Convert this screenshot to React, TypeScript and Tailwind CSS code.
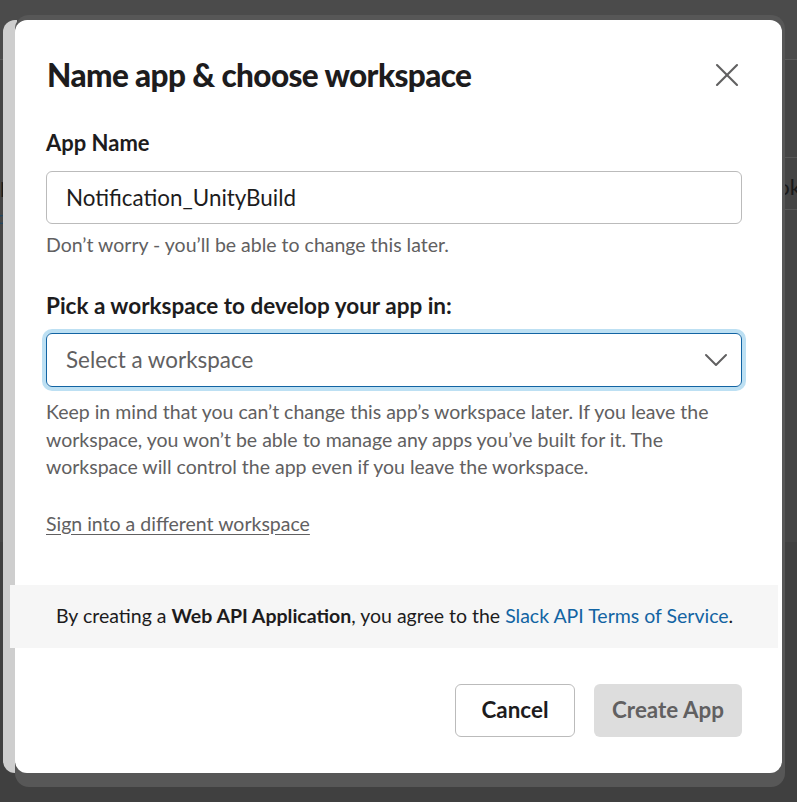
import { X, ChevronDown } from "lucide-react";

export default function App() {
  return (
    <div
      className="relative w-[797px] h-[802px] overflow-hidden bg-[#454545]"
      style={{ fontFamily: "Lato, 'Noto Sans', sans-serif" }}
    >
      {/* faint page behind the overlay */}
      <div className="absolute left-0 top-0 w-full h-[60px] bg-[#4b4b4b] border-b border-[#5a5a5a]" />
      <div className="absolute left-0 top-[168px] text-[22px] text-[#1a1a1a]">p</div>
      <div className="absolute left-[-4px] top-[204px] text-[18px] text-[#1f4660]">c</div>
      <div className="absolute right-0 top-[157px] w-[16px] h-[53px] border-y border-[#575757]" />
      <div className="absolute right-[-4px] top-[170px] text-[22px] text-[#1a1a1a]">ok</div>
      <div className="absolute left-0 bottom-0 w-full h-[260px] bg-[#404040]" />

      <div className="relative flex ml-[3px] mt-[15px]">
        <div className="w-[14px] h-[753px] mt-[5px] bg-[#cecece] rounded-l-[12px]" />
        <div className="-ml-[2px] bg-[#575757] rounded-[14px] pt-[5px] pr-[3px] pb-[14px]">
          <div className="w-[767px] h-[753px] bg-white rounded-[12px] flex flex-col">
            <div className="flex items-center justify-between pl-[32px] pr-[35px] pt-[35px]">
              <h1 className="text-[31.5px] leading-[36px] font-black tracking-[-0.6px] text-[#1d1c1d]">
                Name app &amp; choose workspace
              </h1>
              <X size={40} strokeWidth={1.25} className="text-[#616061]" />
            </div>

            <div className="flex flex-col pl-[31px] pr-[40px] pt-[34px]">
              <label className="text-[22px] leading-[28px] font-bold text-[#1d1c1d]">App Name</label>
              <div className="mt-[14px] h-[53px] border border-[#bbbbbb] rounded-[6px] flex items-center px-[19px] text-[22.4px] text-[#1d1c1d]">
                Notification_UnityBuild
              </div>
              <p className="mt-[8px] text-[19.5px] leading-[26px] text-[#616061]">
                Don’t worry - you’ll be able to change this later.
              </p>

              <label className="mt-[34px] text-[22.5px] leading-[28px] font-bold text-[#1d1c1d]">
                Pick a workspace to develop your app in:
              </label>
              <div className="mt-[13px] h-[54px] border border-[#1264a3] rounded-[6px] ring-4 ring-[#bde0f3] flex items-center justify-between pl-[19px] pr-[5px] text-[22.4px] text-[#616061]">
                <span>Select a workspace</span>
                <ChevronDown size={40} strokeWidth={1.2} className="text-[#616061]" />
              </div>
              <p className="mt-[11px] text-[19.5px] leading-[27.5px] text-[#616061]">
                Keep in mind that you can’t change this app’s workspace later. If you leave the workspace, you won’t be able
                to manage any apps you’ve built for it. The workspace will control the app even if you leave the workspace.
              </p>
              <a className="mt-[30px] text-[19.5px] leading-[26px] text-[#616061] underline underline-offset-[3px]">
                Sign into a different workspace
              </a>
            </div>

            <div className="mt-[48px] -ml-[5px] mr-[4px] h-[63px] bg-[#f6f6f6] flex items-center pl-[46px] text-[19.5px] text-[#1d1c1d]">
              <span>
                By creating a <b className="font-bold">Web API Application</b>, you agree to the{" "}
                <a className="text-[#1264a3]">Slack API Terms of Service</a>.
              </span>
            </div>

            <div className="flex justify-end gap-[19px] pr-[40px] pt-[36px]">
              <button className="h-[53px] w-[120px] border border-[#bbbbbb] rounded-[6px] bg-white text-[22.4px] font-bold text-[#1d1c1d]">
                Cancel
              </button>
              <button className="h-[53px] w-[148px] rounded-[6px] bg-[#dddddd] text-[22.4px] font-bold text-[#616061]">
                Create App
              </button>
            </div>
          </div>
        </div>
      </div>
    </div>
  );
}
